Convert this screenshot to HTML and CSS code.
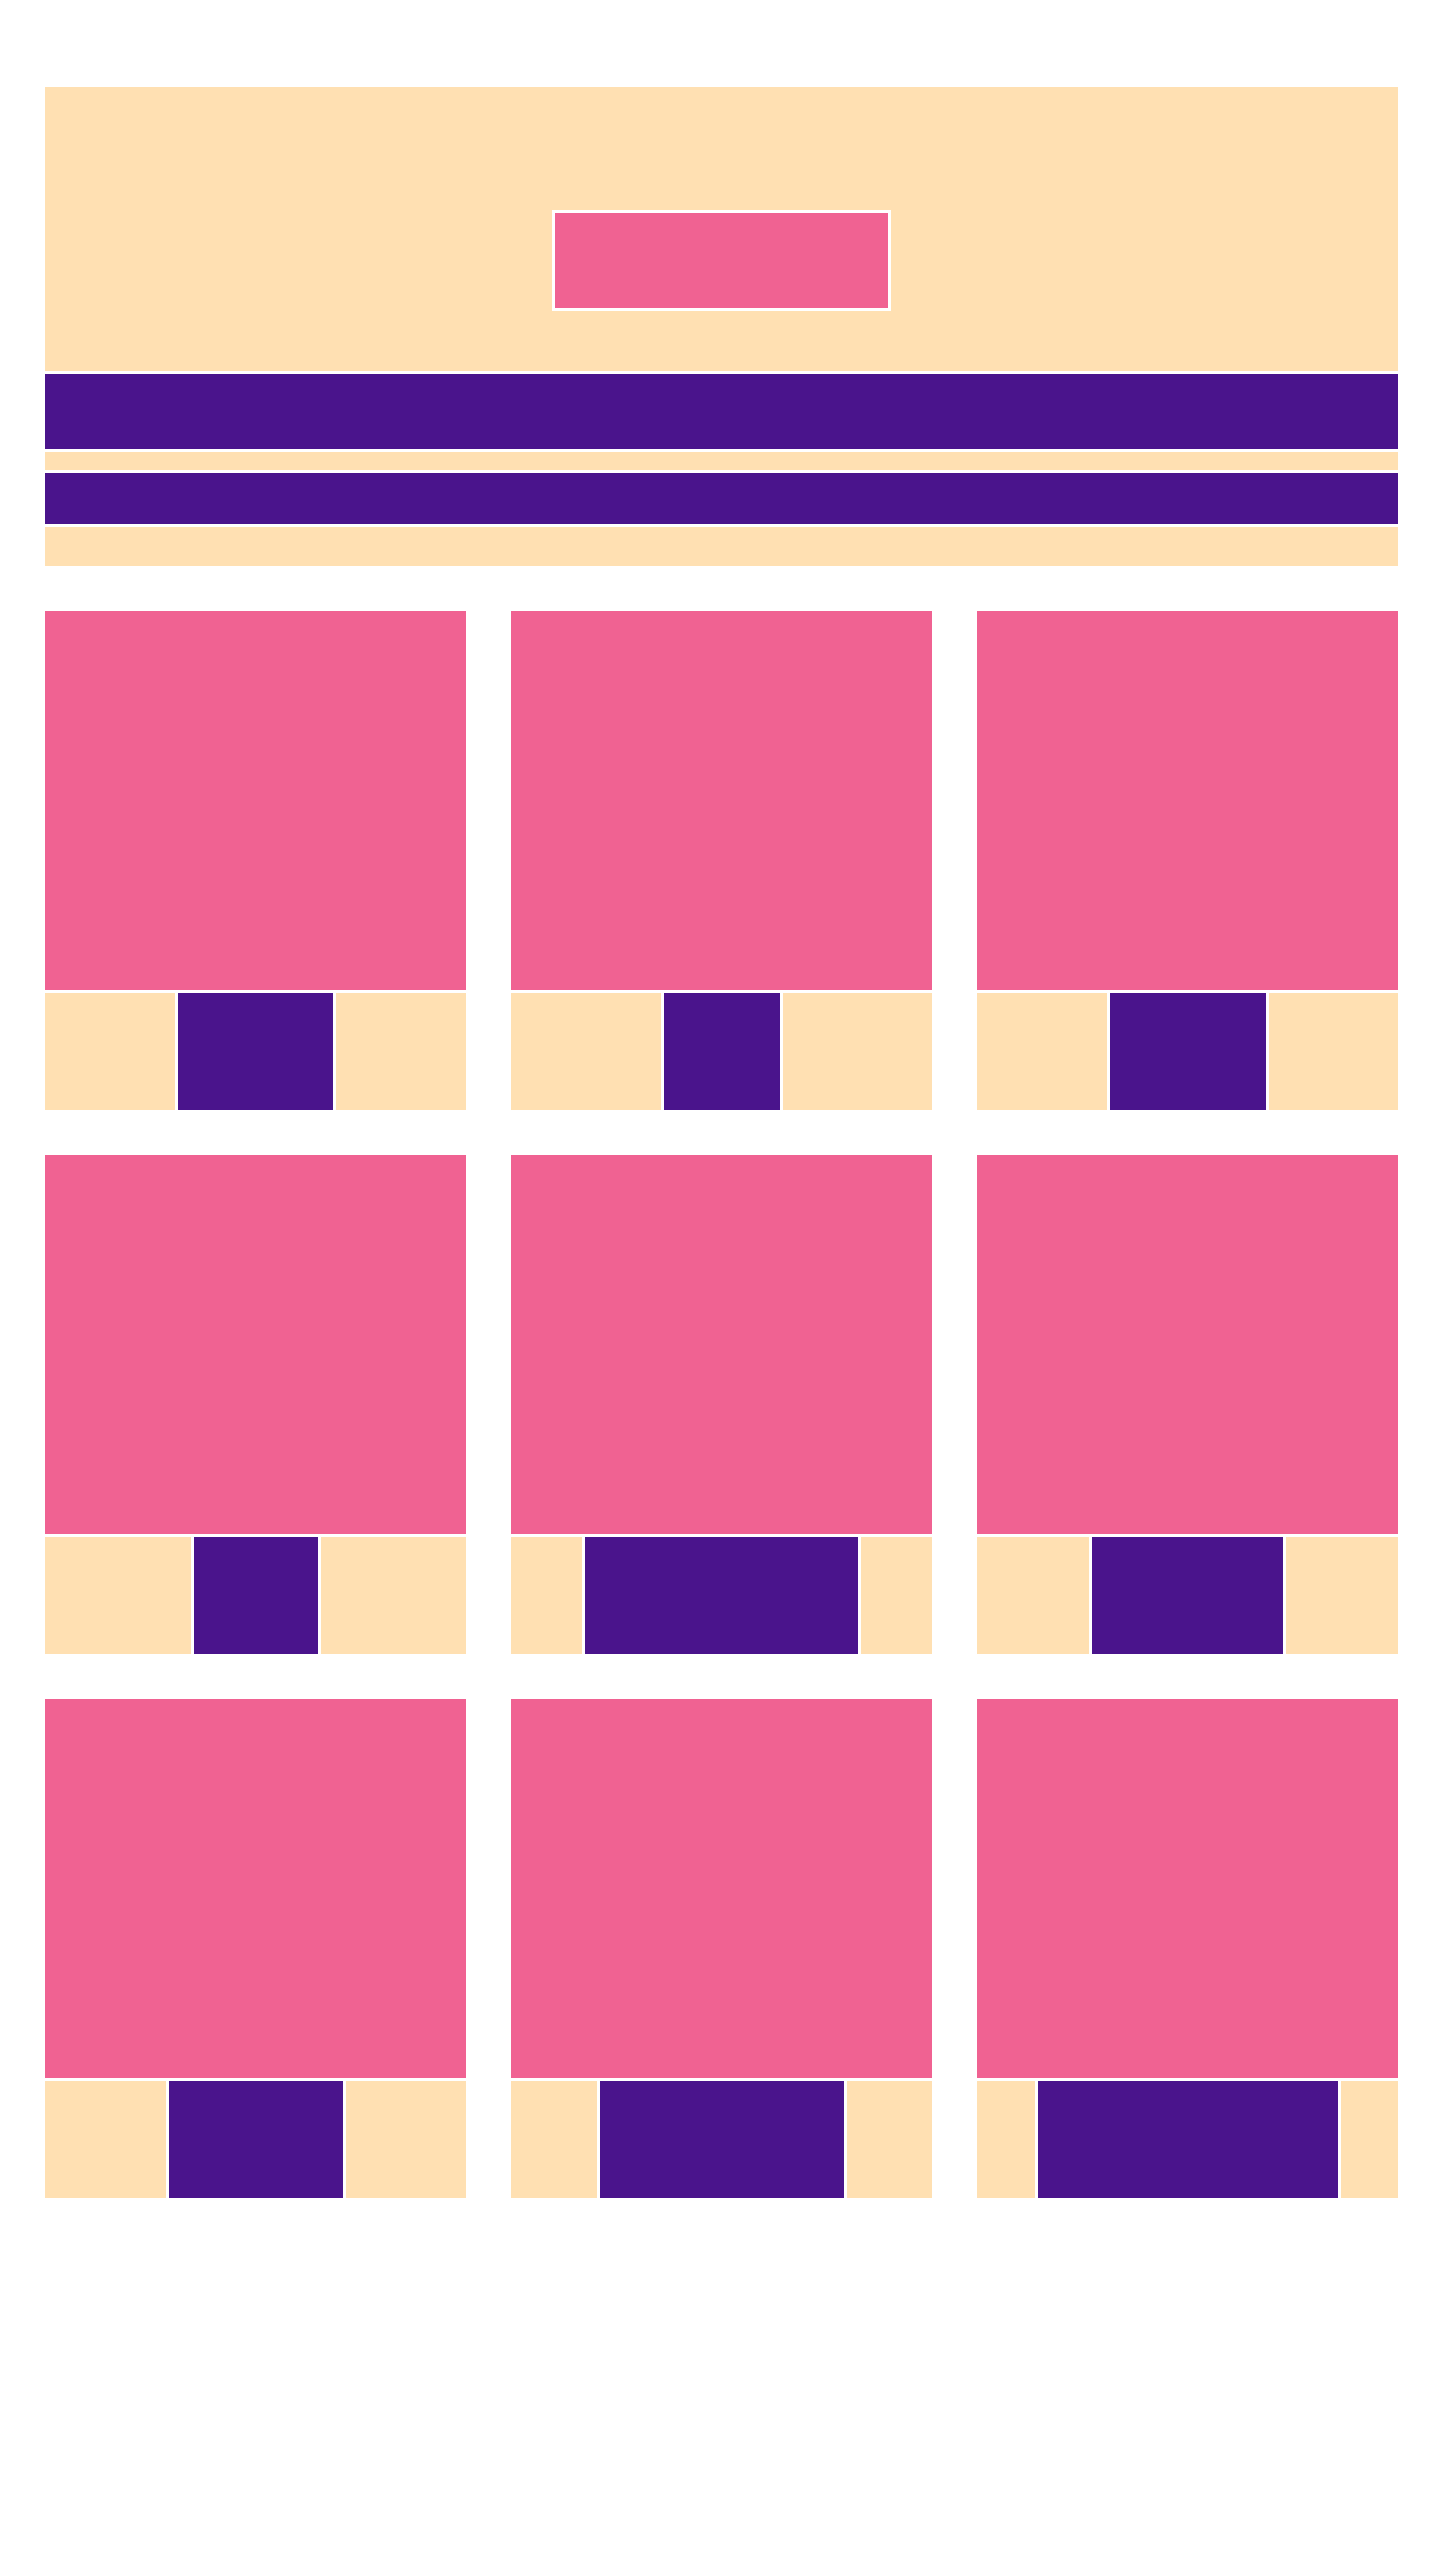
FILE: index.html
```html
<!DOCTYPE html>
<html lang="en">
<head>
    <meta charset="UTF-8">
    <meta name="viewport" content="width=device-width, initial-scale=1.0">
    <title>Shop Layout</title>
    <link rel="stylesheet" href="styles.css">
</head>
<body>
    <div id="page">
        <!-- Top section -->
        <section id="top">
            <header id="hero">
                <div id="hero-btn"></div>
            </header>
            <nav id="main-nav"></nav>
            <div id="notice"></div>
            <div id="sub-nav"></div>
            <div id="info-strip"></div>
        </section>

        <!-- Product grid -->
        <main id="grid">
            <article class="card">
                <div class="card-img"></div>
                <div class="card-foot"><span class="side"></span><span class="tag" style="width: 155px"></span><span class="side"></span></div>
            </article>
            <article class="card">
                <div class="card-img"></div>
                <div class="card-foot"><span class="side"></span><span class="tag" style="width: 116px"></span><span class="side"></span></div>
            </article>
            <article class="card">
                <div class="card-img"></div>
                <div class="card-foot"><span class="side"></span><span class="tag" style="width: 156px"></span><span class="side"></span></div>
            </article>
            <article class="card">
                <div class="card-img"></div>
                <div class="card-foot"><span class="side"></span><span class="tag" style="width: 124px"></span><span class="side"></span></div>
            </article>
            <article class="card">
                <div class="card-img"></div>
                <div class="card-foot"><span class="side"></span><span class="tag" style="width: 273px"></span><span class="side"></span></div>
            </article>
            <article class="card">
                <div class="card-img"></div>
                <div class="card-foot"><span class="side"></span><span class="tag" style="width: 191px"></span><span class="side"></span></div>
            </article>
            <article class="card">
                <div class="card-img"></div>
                <div class="card-foot"><span class="side"></span><span class="tag" style="width: 174px"></span><span class="side"></span></div>
            </article>
            <article class="card">
                <div class="card-img"></div>
                <div class="card-foot"><span class="side"></span><span class="tag" style="width: 244px"></span><span class="side"></span></div>
            </article>
            <article class="card">
                <div class="card-img"></div>
                <div class="card-foot"><span class="side"></span><span class="tag" style="width: 300px"></span><span class="side"></span></div>
            </article>
        </main>
    </div>
</body>
</html>
```

FILE: styles.css
```css
/* General Reset */
* {
    margin: 0;
    padding: 0;
    box-sizing: border-box;
}

body {
    font-family: "Liberation Sans", Arial, sans-serif;
    background-color: #ffffff;
}

#page {
    width: 1353px;
    margin: 0 0 0 45px;
    padding-top: 87px;
}

/* Top Section */
#top {
    display: flex;
    flex-direction: column;
    gap: 3px;
}

#hero {
    background-color: #ffe0b2;
    height: 284px;
    padding-top: 123px;
    display: flex;
    justify-content: center;
    align-items: flex-start;
}

#hero-btn {
    width: 339px;
    height: 101px;
    background-color: #f06292;
    border: 3px solid #ffffff;
}

#main-nav {
    height: 75px;
    background-color: #4a148c;
}

#notice {
    height: 18px;
    background-color: #ffe0b2;
}

#sub-nav {
    height: 51px;
    background-color: #4a148c;
}

#info-strip {
    height: 39px;
    background-color: #ffe0b2;
}

/* Product Grid */
#grid {
    margin-top: 45px;
    display: grid;
    grid-template-columns: repeat(3, 1fr);
    gap: 45px;
}

.card {
    display: flex;
    flex-direction: column;
    gap: 3px;
}

.card-img {
    height: 379px;
    background-color: #f06292;
}

.card-foot {
    height: 117px;
    display: flex;
    gap: 3px;
}

.card-foot .side {
    flex: 1;
    background-color: #ffe0b2;
}

.card-foot .tag {
    flex: none;
    background-color: #4a148c;
}
```
